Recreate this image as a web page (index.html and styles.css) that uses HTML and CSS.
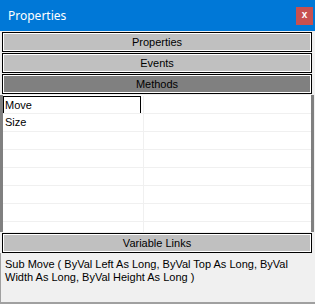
FILE: index.html
```html
<!DOCTYPE html>
<html lang="en">
<head>
  <meta charset="UTF-8" />
  <title>Properties</title>
  <link rel="stylesheet" href="styles.css">
</head>
<body>
  <div class="window">
    <div class="titlebar">
      <span class="title">Properties</span>
      <span class="close">x</span>
    </div>

    <div class="tabs">
      <div class="tab">Properties</div>
      <div class="tab">Events</div>
      <div class="tab active">Methods</div>
    </div>

    <div class="list">
      <div class="row"><div class="cell name"><div class="focus">Move</div></div><div class="cell"></div></div>
      <div class="row"><div class="cell name">Size</div><div class="cell"></div></div>
      <div class="row"><div class="cell name"></div><div class="cell"></div></div>
      <div class="row"><div class="cell name"></div><div class="cell"></div></div>
      <div class="row"><div class="cell name"></div><div class="cell"></div></div>
      <div class="row"><div class="cell name"></div><div class="cell"></div></div>
      <div class="row"><div class="cell name"></div><div class="cell"></div></div>
      <div class="row"><div class="cell name"></div><div class="cell"></div></div>
    </div>

    <div class="tabs">
      <div class="tab">Variable Links</div>
    </div>

    <div class="desc">Sub Move ( ByVal Left As Long, ByVal Top As Long, ByVal Width As Long, ByVal Height As Long )</div>
  </div>
</body>
</html>
```
FILE: styles.css
```css
body {
  margin: 0;
  background: #f0f0f0;
  font-family: "Liberation Sans", Arial, sans-serif;
  font-size: 11px;
  color: #000;
}

.window {
  width: 315px;
  height: 304px;
  display: flex;
  flex-direction: column;
  overflow: hidden;
}

.titlebar {
  height: 31px;
  background: #0078d7;
  display: flex;
  align-items: center;
  justify-content: space-between;
  padding: 0 2px 0 8px;
  box-sizing: border-box;
}

.title {
  color: #fff;
  font-family: "Noto Sans", sans-serif;
  font-size: 12px;
  margin-top: -1px;
}

.close {
  width: 17px;
  height: 18px;
  background: #c75050;
  color: #fff;
  font-weight: bold;
  font-size: 10px;
  display: flex;
  align-items: center;
  justify-content: center;
  line-height: 1;
  padding-bottom: 2px;
  box-sizing: border-box;
}

.tabs {
  display: flex;
  flex-direction: column;
  gap: 1px;
  padding: 1px 3px 0 2px;
}

.tab {
  height: 20px;
  box-sizing: border-box;
  border: 1px solid #000;
  box-shadow: inset 0 0 0 1px #fff;
  background: #c0c0c0;
  text-align: center;
  line-height: 18px;
}

.tab.active {
  background: #808080;
}

.list {
  height: 137px;
  margin: 1px 1px 0 0;
  padding-top: 1px;
  box-sizing: border-box;
  background: #fff;
  border-left: 3px solid #808080;
  border-right: 3px solid #808080;
  overflow: hidden;
}

.row {
  display: flex;
  height: 18px;
  box-sizing: border-box;
  border-bottom: 1px solid #f0f0f0;
}

.cell {
  flex: 1;
  line-height: 17px;
  padding-left: 2px;
}

.cell.name {
  flex: 0 0 141px;
  border-right: 1px solid #f0f0f0;
  box-sizing: border-box;
}

.cell .focus {
  margin-left: -2px;
  width: 138px;
  height: 17px;
  box-sizing: border-box;
  border: 1px solid #000;
  border-bottom: none;
  padding-left: 1px;
  line-height: 16px;
}

.desc {
  flex: 1;
  padding: 5px 4px;
  line-height: 13px;
  border-bottom: 2px solid #a0a0a0;
  border-left: 1px solid #a0a0a0;
}
```
